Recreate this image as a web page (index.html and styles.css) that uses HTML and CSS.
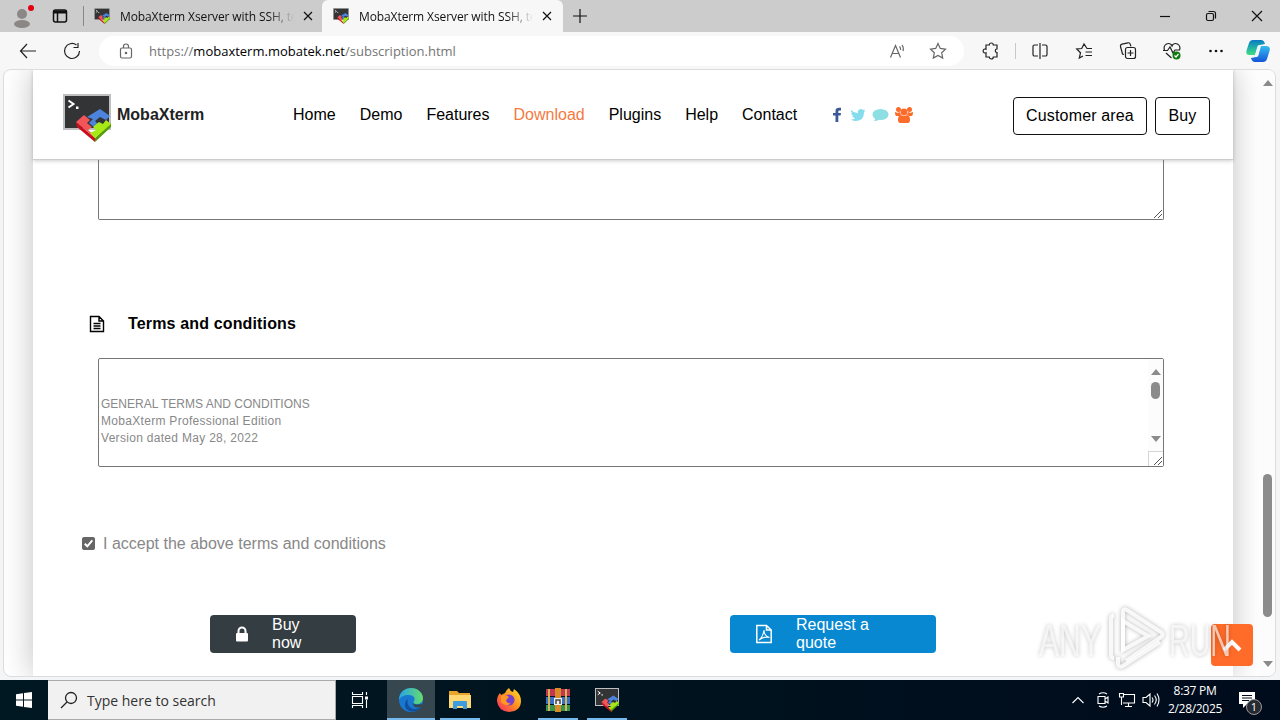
FILE: index.html
```html
<!DOCTYPE html>
<html lang="en">
<head>
    <meta charset="UTF-8">
    <meta name="viewport" content="width=device-width, initial-scale=1.0">
    <title>MobaXterm Xserver with SSH, telnet</title>
    <link rel="stylesheet" href="styles.css">
</head>
<body>

<!-- shared logo -->
<svg width="0" height="0" class="defs">
    <symbol id="moba" viewBox="0 0 48 48">
        <rect x="0" y="0" width="48" height="36" fill="#bfbfbf"/>
        <rect x="2" y="2" width="44" height="32" fill="#333436"/>
        <path d="M5.500 6.500l5 3.500-5 3.500" fill="none" stroke="#fff" stroke-width="2"/>
        <rect x="13" y="12.500" width="2.500" height="2.500" fill="#fff"/>
        <path d="M13 28l19 16v4L14 33z" fill="#c80f1d"/>
        <path d="M32 44l16-15v4L32 48z" fill="#589b0d"/>
        <path d="M13 28l8-7 6 5-3 3 5 4-4 3 7 6v2z" fill="#f25457"/>
        <path d="M24 23l13-8 10 7-4 4-6-3-5 4 3 3-4 3-5-4 4-4z" fill="#4c83dd"/>
        <path d="M30 33l6-5 4 2 3-4 5 4-16 14-5-5 6-3z" fill="#a7e817"/>
    </symbol>
</svg>

<div class="tabstrip">
    <div class="profile">
        <svg width="26" height="26" viewBox="0 0 26 26"><circle cx="13" cy="11" r="5" fill="#8b8785"/><ellipse cx="13" cy="21" rx="8" ry="4" fill="#8b8785"/><circle cx="22" cy="5" r="3" fill="#e3000f"/></svg>
    </div>
    <div class="tab-menu">
        <svg width="16" height="16" viewBox="0 0 16 16" fill="none" stroke="#111" stroke-width="1.500"><rect x="1.500" y="2" width="13" height="12" rx="2"/><path d="M1.500 4h13" stroke-width="3"/><path d="M5.500 4v10"/></svg>
    </div>
    <div class="tab">
        <svg class="fav" width="16" height="16"><use href="#moba"/></svg>
        <span class="tab-title">MobaXterm Xserver with SSH, telnet</span>
        <svg class="x" width="10" height="10" viewBox="0 0 10 10"><path d="M1 1l8 8M9 1l-8 8"/></svg>
    </div>
    <div class="tab active">
        <svg class="fav" width="16" height="16"><use href="#moba"/></svg>
        <span class="tab-title">MobaXterm Xserver with SSH, telnet</span>
        <svg class="x" width="10" height="10" viewBox="0 0 10 10"><path d="M1 1l8 8M9 1l-8 8"/></svg>
    </div>
    <svg class="new-tab" width="14" height="14" viewBox="0 0 14 14"><path d="M7 0v14M0 7h14"/></svg>
    <div class="window-buttons">
        <svg width="12" height="12" viewBox="0 0 12 12"><path d="M1 6.500h10"/></svg>
        <svg width="12" height="12" viewBox="0 0 12 12"><rect x="1.500" y="3.500" width="7" height="7" rx="1.500"/><path d="M3.500 1.500h5a2 2 0 0 1 2 2v5"/></svg>
        <svg width="12" height="12" viewBox="0 0 12 12"><path d="M1 1l10 10M11 1L1 11"/></svg>
    </div>
</div>

<div class="toolbar">
    <div class="tool nav-tool"><svg width="18" height="16" viewBox="0 0 18 16"><path d="M17 8H1.500M8 1L1.500 8 8 15"/></svg></div>
    <div class="tool"><svg width="18" height="18" viewBox="0 0 18 18"><path d="M16.500 9a7.500 7.500 0 1 1-3-6M15 1v4.500h-4.500"/></svg></div>
    <div class="address">
        <svg class="lock" width="14" height="16" viewBox="0 0 14 16"><rect x="1.500" y="5" width="11" height="10" rx="1.500"/><path d="M4.500 5V3.500a2.500 2.500 0 0 1 5 0V5"/><circle cx="7" cy="10" r=".7"/></svg>
        <span class="url">https://<b>mobaxterm.mobatek.net</b>/subscription.html</span>
        <svg class="read" width="18" height="16" viewBox="0 0 18 16"><path d="M1.500 14.500L6.500 2.500l5 12M3.200 10.500h6.600M10.500 3.500q1.500 1.500 1 3.500M13 2q2 2.500 1 6"/></svg>
        <svg class="star" width="18" height="18" viewBox="0 0 18 18"><path d="M9 1.500l2.300 4.900 5.200.7-3.800 3.700 1 5.300L9 13.500l-4.700 2.600 1-5.300L1.500 7.100l5.200-.7z"/></svg>
    </div>
    <div class="tool ext"><svg width="18" height="18" viewBox="0 0 18 18"><path d="M4 3h3.300a2 2 0 0 1 4 0H15v4a1.500 1.500 0 0 0 0 3.500V15h-3.700a2 2 0 0 1-4 0H4v-4.200a2 2 0 1 1 0-3.600z"/></svg></div>
    <span class="divider"></span>
    <div class="tool"><svg width="18" height="18" viewBox="0 0 18 18"><path d="M7 3H3.500A1.500 1.500 0 0 0 2 4.500v8A1.500 1.500 0 0 0 3.500 14H7M11 3h3.500A1.500 1.500 0 0 1 16 4.500v8a1.500 1.500 0 0 1-1.500 1.500H11M9 1v16"/></svg></div>
    <div class="tool"><svg width="18" height="18" viewBox="0 0 18 18"><path d="M17 6.500h-5L9 2 6.700 6.500l-5 .5 3.800 3.700-1.200 5.300 3.700-2M10.500 10H17M10.500 13.500H17"/></svg></div>
    <div class="tool"><svg width="18" height="18" viewBox="0 0 18 18"><rect x="6.500" y="5.500" width="10" height="11" rx="2"/><path d="M11.500 8v6M8.500 11h6M5 12.500L3.500 12l-2-7.500A2 2 0 0 1 3 2.200l6-1.400a2 2 0 0 1 2.300 1.500l.6 2"/></svg></div>
    <div class="tool"><svg width="18" height="18" viewBox="0 0 18 18"><path d="M1.500 8C0 4 3 1.500 5.500 1.500S9 4 9 4s1-2.500 3.500-2.500S18 4 16.500 8M3 11l5.500 5M0 8.500h4.500L7 5l3 6 2-3h5"/><circle cx="13.500" cy="13.500" r="4" fill="#107c10" stroke="none"/><path d="M11.500 13.500l1.500 1.500 2.500-3" stroke="#fff"/></svg></div>
    <div class="tool"><svg width="18" height="18" viewBox="0 0 18 18"><g fill="#111" stroke="none"><circle cx="3.500" cy="9" r="1.300"/><circle cx="9" cy="9" r="1.300"/><circle cx="14.500" cy="9" r="1.300"/></g></svg></div>
    <div class="copilot">
        <svg width="24" height="24" viewBox="0 0 24 24">
            <defs>
                <linearGradient id="cpa" x1="0" y1="0" x2="0" y2="1"><stop offset="0" stop-color="#087ac5"/><stop offset=".55" stop-color="#23b6a5"/><stop offset="1" stop-color="#42dc83"/></linearGradient>
                <linearGradient id="cpb" x1="0" y1="0" x2="0" y2="1"><stop offset="0" stop-color="#35bcf0"/><stop offset="1" stop-color="#1555d8"/></linearGradient>
            </defs>
            <path d="M7 1h8q3 0 4 4l-5 1q-2 0-3 4l-2 6H3q-4 0-2-6l2-6q1-3 4-3z" fill="url(#cpa)"/>
            <path d="M17 23H9q-3 0-4-4l5-1q2 0 3-4l2-7h5q5 0 3.500 5l-2.500 8q-1 3-4 3z" fill="url(#cpb)"/>
            <path d="M14 6h-1q-1.500 0-2 3l-2.500 9h2q1.500 0 2-2z" fill="#edf7fc"/>
        </svg>
    </div>
</div>

<div class="viewport">
    <div class="page">
        <header class="site-header">
            <svg class="logo" width="48" height="48"><use href="#moba"/></svg>
            <span class="brand">MobaXterm</span>
            <nav class="menu">
                <a>Home</a>
                <a>Demo</a>
                <a>Features</a>
                <a class="current">Download</a>
                <a>Plugins</a>
                <a>Help</a>
                <a>Contact</a>
            </nav>
            <div class="social">
                <svg width="10" height="16" viewBox="0 0 10 16"><path d="M9 .8v2.600H7.500Q6.300 3.400 6.300 4.500V6H9l-.4 2.600H6.300V15H3.500V8.600H1V6h2.500V4Q3.500.7 7 .7z" fill="#3b5998"/></svg>
                <svg width="16" height="16" viewBox="0 0 16 16"><path d="M1 3q3 3.200 6.800 3.200Q7.500 2.500 10.500 2q1.500 0 2.500 1l2-.7-1.300 1.700 1.800-.4L14 5.200Q14 13.500 6 14q-3 0-5-1.500 2.500 0 4.200-1.200Q3 11 2.300 9h1.400Q1.200 8 1.200 5.500l1.300.4Q.2 4.500 1 3z" fill="#84dcec"/></svg>
                <svg width="17" height="16" viewBox="0 0 17 16"><ellipse cx="8.500" cy="7.500" rx="8" ry="5.600" fill="#8edfe4"/><path d="M3.500 10q0 3-2 4.300 4 0 6-2z" fill="#8edfe4"/></svg>
                <svg width="18" height="18" viewBox="0 0 18 18"><g fill="#fb6c2b"><circle cx="3.500" cy="3.500" r="2.500"/><circle cx="14.500" cy="3.500" r="2.500"/><circle cx="9" cy="6" r="3.400"/><path d="M0 6q3 1.500 5 0l1 3-2 1H1.500Q0 10 0 6zM18 6q-3 1.500-5 0l-1 3 2 1h2.500Q18 10 18 6zM3 14q0-5 3-5 3 2 6 0 3 0 3 5 0 3-2.500 3h-7Q3 17 3 14z"/></g></svg>
            </div>
            <a class="outline-btn">Customer area</a>
            <a class="outline-btn buy">Buy</a>
        </header>

        <form class="order">
            <div class="comment-box">
                <svg class="grip" width="12" height="12" viewBox="0 0 12 12"><path d="M3 11l8-8M7 11l4-4"/></svg>
            </div>

            <h3 class="section-title">
                <svg width="16" height="18" viewBox="0 0 16 18"><path d="M1.500 1.500h8.500l4.500 4.500v10.500h-13zM10 1.500V6h4.500M4.500 8.500h7M4.500 11h7M4.500 13.500h7"/></svg>
                Terms and conditions
            </h3>

            <div class="terms-box">
                <div class="terms-text">
                    <p class="caps">GENERAL TERMS AND CONDITIONS</p>
                    <p>MobaXterm Professional Edition</p>
                    <p>Version dated May 28, 2022</p>
                </div>
                <div class="terms-scroll">
                    <i class="arrow up"></i>
                    <i class="thumb"></i>
                    <i class="arrow down"></i>
                    <div class="corner"><svg class="grip" width="12" height="12" viewBox="0 0 12 12"><path d="M3 11l8-8M7 11l4-4"/></svg></div>
                </div>
            </div>

            <div class="accept">
                <svg width="13" height="13" viewBox="0 0 13 13"><rect width="13" height="13" rx="2" fill="#666"/><path d="M2.800 6.800l2.500 2.500 5-6" fill="none" stroke="#fff" stroke-width="2"/></svg>
                <span>I accept the above terms and conditions</span>
            </div>

            <div class="actions">
                <a class="btn dark">
                    <svg width="12" height="16" viewBox="0 0 12 16"><path d="M2.500 8V5a3.500 3.500 0 0 1 7 0v3" fill="none" stroke="#fff" stroke-width="2"/><rect y="7" width="12" height="8.500" rx="1" fill="#fff"/></svg>
                    <span>Buy now</span>
                </a>
                <a class="btn blue">
                    <svg width="16" height="20" viewBox="0 0 16 20" fill="none" stroke="#fff" stroke-width="1.500"><path d="M.8 1.500H10.500L15.200 6v12.500H.8zM10.500 1.500V6h4.700"/><path d="M3 16q4-3 5-10 0 6 5.500 7.500Q8 12 3 16z" stroke-width="1.100"/></svg>
                    <span>Request a quote</span>
                </a>
            </div>
        </form>
    </div>
    <div class="page-scroll">
        <i class="arrow up"></i>
        <i class="thumb"></i>
        <i class="arrow down"></i>
    </div>
    <a class="to-top"><svg width="20" height="14" viewBox="0 0 20 14"><path d="M2 12l8-8 8 8" fill="none" stroke="#fff" stroke-width="4"/></svg></a>
    <svg class="watermark" width="204" height="70" viewBox="0 0 204 70">
        <g class="mark-text">
            <text x="7" y="52" textLength="62" lengthAdjust="spacingAndGlyphs">ANY</text>
            <text x="137" y="52" textLength="62" lengthAdjust="spacingAndGlyphs">RUN</text>
        </g>
        <g class="mark-shape">
            <path d="M82 11q-3 1-3 4v36q0 3 3 3M91 47V8q0-4 4-2l34 22q3 3 0 5L94 57"/>
            <path d="M91 17v29l25-14zM86 53v7q1 4 5 2l37-24"/>
        </g>
    </svg>
</div>

<div class="taskbar">
    <div class="start"><svg width="16" height="16" viewBox="0 0 16 16"><path d="M0 2.200L7 1.200V7.500H0zM8 1l8-1v7.500H8zM0 8.500h7v6.300l-7-1zM8 8.500h8V16l-8-1z" fill="#fff"/></svg></div>
    <div class="search">
        <svg width="18" height="18" viewBox="0 0 18 18"><circle cx="11" cy="7" r="5.500"/><path d="M7 11l-6 6"/></svg>
        <span>Type here to search</span>
    </div>
    <div class="task-view"><svg width="18" height="18" viewBox="0 0 18 18"><path d="M1.500 1v2.500h10V1M1.500 17v-2.500h10V17M1.500 5.500h10v7h-10zM15.500 1v3M15.500 9v8"/><path d="M14 5.500h3v3h-3z" fill="#fff" stroke="none"/></svg></div>
    <div class="app active">
        <svg width="24" height="24" viewBox="0 0 24 24">
            <defs><linearGradient id="edge"><stop offset="0" stop-color="#28a4e8"/><stop offset="1" stop-color="#65db6c"/></linearGradient></defs>
            <circle cx="12" cy="12" r="12" fill="#1878cf"/>
            <path d="M0 12C0 4 6 0 12 0c7 0 12 5 12 10 0 4-3 6-6 6-4 0-4-2-3-3 2-3-1-6-5-6C5 7 1 9 0 12z" fill="url(#edge)"/>
            <path d="M9 11c-2 5 2 10 7 10 2 0 4-1 6-2-6 8-17 4-16-3 0-2 1-4 3-5z" fill="#114f9f"/>
            <path d="M14 15q2 3 8 1l2 1-2 2q-8 2-8-4z" fill="#37474f"/>
        </svg>
    </div>
    <div class="app open">
        <svg width="22" height="20" viewBox="0 0 22 20"><path d="M0 1h8l2 2h11v15H0z" fill="#e7a52b"/><path d="M0 5h22v13H0z" fill="#ffd873"/><path d="M4 19v-7q0-1 1-1h12q1 0 1 1v7h-4v-3H8v3z" fill="#3d9be0"/></svg>
    </div>
    <div class="app">
        <svg width="24" height="24" viewBox="0 0 24 24">
            <defs><linearGradient id="fox" x1="1" y1="0" x2="0" y2="1"><stop offset="0" stop-color="#ffe52e"/><stop offset=".5" stop-color="#ff8b20"/><stop offset="1" stop-color="#f51f6c"/></linearGradient></defs>
            <path d="M3 5l1 2 4-2q1-3 4-5 1 3 4 4l1-3q7 5 7 12 0 10-12 11Q1 23 0 13q0-5 3-8z" fill="url(#fox)"/>
            <circle cx="12" cy="12" r="5.500" fill="#7741cc"/>
            <path d="M4 8q5-2 8 1l-3 3q1 4 5 3-5 5-10-1z" fill="#ff9722"/>
        </svg>
    </div>
    <div class="app open">
        <svg width="24" height="24" viewBox="0 0 24 24"><rect y="1" width="24" height="7" fill="#c43752"/><rect y="9" width="24" height="7" fill="#3671c5"/><rect y="17" width="24" height="6" fill="#369451"/><path d="M3 1v22M20 1v22" stroke="#d9b453" stroke-width="2"/><rect x="9" width="6" height="24" fill="#d98b27"/><rect x="8" y="10" width="8" height="7" fill="#eee"/><path d="M10 16v-4h4v4" fill="none" stroke="#444" stroke-width="1.500"/></svg>
    </div>
    <div class="app open"><svg width="24" height="24"><use href="#moba"/></svg></div>
    <div class="tray">
        <svg class="chevron" width="12" height="8" viewBox="0 0 12 8"><path d="M.5 7L6 1.500 11.500 7"/></svg>
        <svg class="meet" width="14" height="16" viewBox="0 0 14 16"><path d="M3 2Q7-.5 11 2M3 14q4 2.500 8 0M2 4.500h7v7H2zM9 7l3-2v6L9 9"/></svg>
        <svg class="net" width="18" height="16" viewBox="0 0 18 16"><path d="M5 2.500h11.500v8.500H5M10.500 11v3.500M7 14.500h7M1.500 1.500h4v3.500h-4zM3.500 5v8"/></svg>
        <svg class="sound" width="18" height="16" viewBox="0 0 18 16"><path d="M1 5.500h3L8 2v12l-4-3.500H1zM10 5.500q2 2.500 0 5M12.500 3.500q3.500 4.500 0 9M15 1.500q4 6.500 0 13"/></svg>
        <div class="clock"><span>8:37 PM</span><span>2/28/2025</span></div>
        <div class="notice">
            <svg width="16" height="16" viewBox="0 0 16 16"><path d="M0 0h16v12H8l-4 4v-4H0z" fill="#fff"/><path d="M3 3.500h10M3 6h10M3 8.500h7" stroke="#000b1c"/></svg>
            <span class="count">1</span>
        </div>
    </div>
</div>

</body>
</html>
```

FILE: styles.css
```css
* {
    box-sizing: border-box;
}

body {
    margin: 0;
    width: 1280px;
    height: 720px;
    overflow: hidden;
    display: flex;
    flex-direction: column;
    background-color: #f3f5f7;
    font-family: "Liberation Sans", Arial, sans-serif;
    font-size: 16px;
    color: #111;
}

svg {
    display: block;
    flex: none;
}

.defs {
    position: absolute;
}

/* browser tabs */
.tabstrip {
    flex: none;
    height: 32px;
    display: flex;
    align-items: center;
    background-color: #ccc;
    font: 12px "Open Sans", sans-serif;
}

.profile {
    width: 44px;
    padding-left: 9px;
}

.tab-menu {
    width: 40px;
    height: 20px;
    padding: 2px 0 0 8px;
    border-right: 1px solid #888;
}

.tab {
    width: 238px;
    height: 32px;
    display: flex;
    align-items: center;
    padding-left: 10px;
}

.tab.active {
    width: 241px;
    padding-left: 11px;
    background-color: #f7f7f7;
    border-radius: 6px 6px 0 0;
}

.tab-title {
    width: 174px;
    margin: 0 9px 0 10px;
    overflow: hidden;
    white-space: nowrap;
    letter-spacing: -0.1px;
    -webkit-mask-image: linear-gradient(to right, #000 148px, transparent 174px);
    mask-image: linear-gradient(to right, #000 148px, transparent 174px);
}

.x,
.new-tab,
.window-buttons svg {
    fill: none;
    stroke: #111;
    stroke-width: 1.2;
}

.new-tab {
    margin-left: 10px;
}

.window-buttons {
    margin-left: auto;
    display: flex;
    gap: 34px;
    padding-right: 17px;
}

/* browser toolbar */
.toolbar {
    flex: none;
    height: 38px;
    display: flex;
    align-items: center;
    background-color: #f7f7f7;
}

.tool {
    width: 44px;
    display: flex;
    justify-content: center;
}

.nav-tool {
    margin-left: 6px;
}

.tool svg,
.address svg {
    fill: none;
    stroke: #222;
    stroke-width: 1.2;
}

.address {
    width: 865px;
    height: 30px;
    margin-left: 5px;
    display: flex;
    align-items: center;
    padding: 0 17px 0 20px;
    background-color: #fff;
    border-radius: 15px;
}

.address svg {
    stroke: #666;
}

.url {
    margin-left: 16px;
    flex: 1;
    font: 13px "Open Sans", sans-serif;
    color: #757575;
}

.url b {
    font-weight: normal;
    color: #000;
}

.star {
    margin-left: 22px;
}

.ext {
    margin-left: 5px;
}

.divider {
    width: 1px;
    height: 16px;
    margin: 0 2px;
    background-color: #c8c8c8;
}

.copilot {
    margin-left: 8px;
}

/* page area */
.viewport {
    position: relative;
    flex: none;
    width: 1273px;
    height: 608px;
    margin: -1px 0 0 3px;
    display: flex;
    overflow: hidden;
    background-color: #fff;
    border: 1px solid #dcdcdc;
    border-radius: 8px;
}

.page {
    width: 1200px;
    margin-left: 29px;
    background-color: #fff;
    box-shadow: 0 0 30px rgba(0, 0, 0, 0.25);
}

.site-header {
    height: 90px;
    display: flex;
    align-items: center;
    padding-left: 30px;
    border-bottom: 1px solid #ccc;
    box-shadow: 0 1px 4px rgba(0, 0, 0, 0.2);
}

.logo {
    margin-top: 6px;
}

.brand {
    width: 176px;
    margin-left: 6px;
    font-weight: bold;
    color: #222;
}

.menu {
    width: 518px;
    display: flex;
    gap: 24px;
    color: #000;
}

.menu .current {
    color: #f47a42;
}

.social {
    width: 181px;
    margin-left: 21px;
    display: flex;
    align-items: center;
    gap: 8px;
}

.social svg + svg + svg {
    margin-left: -2px;
}

.outline-btn {
    width: 134px;
    height: 38px;
    margin-top: 2px;
    border: 1px solid #111;
    border-radius: 4px;
    line-height: 36px;
    text-align: center;
    color: #000;
    letter-spacing: 0.15px;
}

.outline-btn.buy {
    width: 55px;
    margin-left: 8px;
}

.order {
    display: flex;
    flex-direction: column;
}

.comment-box {
    width: 1066px;
    height: 60px;
    margin-left: 65px;
    border: 1px solid #767676;
    border-top: none;
    border-radius: 0 0 2px 2px;
    display: flex;
    align-items: flex-end;
    justify-content: flex-end;
}

.grip {
    stroke: #555;
    stroke-width: 1;
}

.section-title {
    height: 20px;
    margin: 94px 0 24px 56px;
    display: flex;
    align-items: center;
    gap: 23px;
    font-size: 16px;
    line-height: 20px;
    color: #000;
    letter-spacing: 0.15px;
}

.section-title svg {
    fill: none;
    stroke: #000;
    stroke-width: 1.4;
}

.terms-box {
    width: 1066px;
    height: 109px;
    margin-left: 65px;
    display: flex;
    justify-content: space-between;
    border: 1px solid #767676;
    border-radius: 2px;
}

.terms-text {
    padding: 37px 0 0 2px;
    font-size: 12px;
    line-height: 17px;
    color: #888;
    letter-spacing: 0.3px;
}

.terms-text p {
    margin: 0;
}

.terms-text .caps {
    letter-spacing: 0;
}

.terms-scroll {
    width: 15px;
    display: flex;
    flex-direction: column;
    align-items: center;
    padding-top: 10px;
    background-color: #fcfcfc;
}

.arrow {
    border: 5px solid transparent;
}

.arrow.up {
    border-top: none;
    border-bottom: 6px solid #8b8b8b;
}

.arrow.down {
    border-bottom: none;
    border-top: 6px solid #8b8b8b;
}

.thumb {
    width: 9px;
    background-color: #8b8b8b;
    border-radius: 5px;
}

.terms-scroll .thumb {
    height: 17px;
    margin: 7px 0 37px;
}

.corner {
    width: 15px;
    height: 15px;
    margin-top: auto;
    padding: 2px;
    background-color: #fff;
    border-top: 1px solid #d5d5d5;
    border-left: 1px solid #d5d5d5;
}

.accept {
    height: 20px;
    margin: 67px 0 0 49px;
    display: flex;
    align-items: center;
    gap: 8px;
    color: #888;
}

.accept svg {
    margin-top: -2px;
}

.actions {
    display: flex;
    gap: 374px;
    margin: 61px 0 0 177px;
}

.btn {
    height: 38px;
    display: flex;
    align-items: center;
    padding: 0 26px;
    border-radius: 4px;
    color: #fff;
}

.dark {
    width: 146px;
    gap: 24px;
    background-color: #343d41;
}

.blue {
    width: 206px;
    gap: 24px;
    background-color: #0788d0;
}

.page-scroll {
    width: 15px;
    margin-left: auto;
    display: flex;
    flex-direction: column;
    align-items: center;
    padding: 10px 0 9px;
    z-index: 1;
    background-color: #fcfcfc;
}

.page-scroll .thumb {
    height: 143px;
    margin: auto 0 44px;
}

.to-top {
    position: absolute;
    right: 22px;
    bottom: 10px;
    width: 42px;
    height: 42px;
    display: flex;
    align-items: center;
    justify-content: center;
    background-color: #ff6c29;
    border-radius: 4px;
}

.watermark {
    position: absolute;
    right: 39px;
    bottom: 2px;
    filter: drop-shadow(0 0 2px rgba(0, 0, 0, 0.35));
}

.mark-text {
    font: 44px "Liberation Sans", sans-serif;
    fill: rgba(255, 255, 255, 0.65);
}

.mark-shape {
    fill: none;
    stroke: rgba(255, 255, 255, 0.85);
    stroke-width: 4;
}

/* windows taskbar */
.taskbar {
    height: 40px;
    margin-top: auto;
    display: flex;
    background: linear-gradient(to right, #001822, #00131f 50%, #000b1c);
}

.start {
    width: 48px;
    display: flex;
    align-items: center;
    justify-content: center;
}

.search {
    width: 288px;
    display: flex;
    align-items: center;
    gap: 9px;
    padding-left: 12px;
    background-color: #f1f1f1;
    border: 1px solid #aaa;
    border-left: none;
    font: 14px "Open Sans", sans-serif;
    color: #333;
}

.search svg {
    fill: none;
    stroke: #222;
    stroke-width: 1.3;
}

.task-view {
    width: 51px;
    display: flex;
    align-items: center;
    padding-left: 15px;
}

.task-view svg,
.tray > svg {
    fill: none;
    stroke: #fff;
    stroke-width: 1.1;
}

.app {
    width: 40px;
    margin-right: 9px;
    display: flex;
    align-items: center;
    justify-content: center;
    border-bottom: 2px solid transparent;
    padding-top: 1px;
}

.app.active {
    width: 48px;
    margin-right: 5px;
    background-color: #37474f;
}

.app.active,
.app.open {
    border-color: #76b9ed;
}

.tray {
    margin-left: auto;
    display: flex;
    align-items: center;
    color: #fff;
}

.meet {
    margin-left: 12px;
}

.net {
    margin-left: 8px;
}

.sound {
    margin-left: 6px;
}

.clock {
    width: 70px;
    display: flex;
    flex-direction: column;
    align-items: center;
    font: 12px/18px "Open Sans", sans-serif;
    letter-spacing: -0.3px;
}

.notice {
    position: relative;
    margin: 0 25px 0 9px;
}

.count {
    position: absolute;
    left: 7px;
    top: 7px;
    width: 16px;
    height: 16px;
    border: 1px solid #999;
    border-radius: 50%;
    background-color: #252a33;
    font: 11px/14px "Open Sans", sans-serif;
    text-align: center;
}
```
